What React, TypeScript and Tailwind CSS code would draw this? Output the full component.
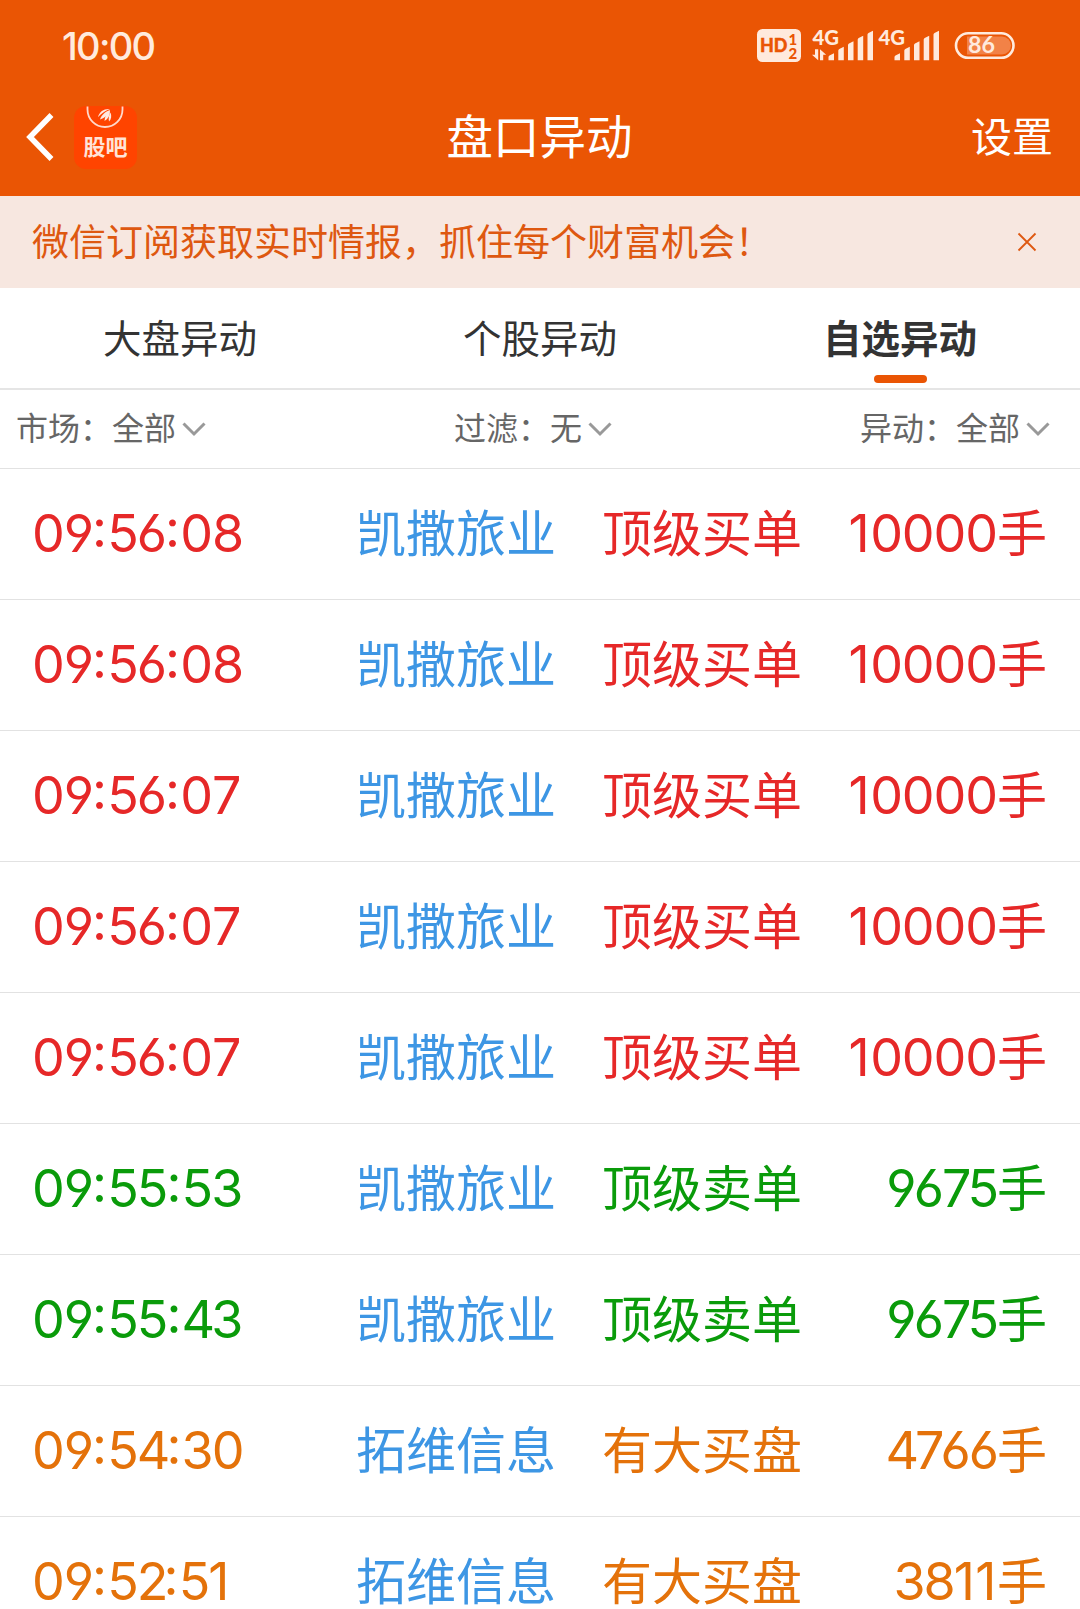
import { useState } from "react";

type Tone = "red" | "green" | "orange";

interface Alert {
  time: string;
  name: string;
  kind: string;
  lots: number;
  tone: Tone;
}

interface Filter {
  label: string;
  value: string;
}

const TONES: Record<Tone, string> = {
  red: "text-[#e62828]",
  green: "text-[#0a9b0a]",
  orange: "text-[#e4720a]",
};

// Optical spacing per digit, anything not listed uses the default.
const DIGIT_TRACKING: Record<string, string> = {
  ":": "tracking-[0.2px]",
  "0": "tracking-[-1.1px]",
  "1": "tracking-[0.5px]",
  "2": "tracking-[-5px]",
  "4": "tracking-[-4px]",
  "7": "tracking-[-4px]",
};

const TABS = ["大盘异动", "个股异动", "自选异动"];

const FILTERS: Filter[] = [
  { label: "市场", value: "全部" },
  { label: "过滤", value: "无" },
  { label: "异动", value: "全部" },
];

const ALERTS: Alert[] = [
  { time: "09:56:08", name: "凯撒旅业", kind: "顶级买单", lots: 10000, tone: "red" },
  { time: "09:56:08", name: "凯撒旅业", kind: "顶级买单", lots: 10000, tone: "red" },
  { time: "09:56:07", name: "凯撒旅业", kind: "顶级买单", lots: 10000, tone: "red" },
  { time: "09:56:07", name: "凯撒旅业", kind: "顶级买单", lots: 10000, tone: "red" },
  { time: "09:56:07", name: "凯撒旅业", kind: "顶级买单", lots: 10000, tone: "red" },
  { time: "09:55:53", name: "凯撒旅业", kind: "顶级卖单", lots: 9675, tone: "green" },
  { time: "09:55:43", name: "凯撒旅业", kind: "顶级卖单", lots: 9675, tone: "green" },
  { time: "09:54:30", name: "拓维信息", kind: "有大买盘", lots: 4766, tone: "orange" },
  { time: "09:52:51", name: "拓维信息", kind: "有大买盘", lots: 3811, tone: "orange" },
];

function Digits({ value }: { value: string }) {
  return (
    <span className="text-[52px] [font-feature-settings:'cv03','cv04','case']">
      {value.split("").map((c, i) => (
        <span key={i} className={DIGIT_TRACKING[c] ?? "tracking-[-2px]"}>
          {c}
        </span>
      ))}
    </span>
  );
}

function SignalBars({ x }: { x: number }) {
  return (
    <path
      transform={`translate(${x} 0)`}
      d="M0 32.3V29q0-1 1-1.500l4.500-2.300v7.100zM9.800 32.300V22.500q0-1 1-1.500l4.500-2.300v13.600zM19.500 32.300V17q0-1 1-1.500l4.500-2.300v19.100zM29.200 32.300V11.500q0-1 1-1.500l4.500-2.300v24.600zM39 32.300V6.500q0-1 1-1.500l4.500-2.300v29.600z"
    />
  );
}

function StatusIcons() {
  return (
    <svg
      width="262"
      height="36"
      viewBox="0 0 262 36"
      fill="#ffeadd"
      className="overflow-visible font-['Lato','Liberation_Sans',sans-serif]"
    >
      <rect x="1" y="1" width="44" height="33" rx="5.500" />
      <g fill="#ea5504">
        <text x="4" y="24.300" fontSize="18.500" fontWeight="900" stroke="#ea5504" strokeWidth=".4" textLength="27.500" lengthAdjust="spacingAndGlyphs">
          HD
        </text>
        <text x="32.500" y="17" fontSize="15" fontWeight="900">
          1
        </text>
        <text x="32.500" y="30.800" fontSize="15" fontWeight="900">
          2
        </text>
      </g>

      <text x="56.500" y="16.500" fontSize="20" fontWeight="900" textLength="26.500" lengthAdjust="spacingAndGlyphs">
        4G
      </text>
      {/* data arrows */}
      <path d="M59 21.300h3.200v11L56 26.800h3zM64 21.300l6.200 5.500h-3v5.500H64z" />
      <SignalBars x={72.5} />

      <text x="122.500" y="16.500" fontSize="20" fontWeight="900" textLength="26.500" lengthAdjust="spacingAndGlyphs">
        4G
      </text>
      <SignalBars x={138.5} />

      <rect x="200" y="5.300" width="57.500" height="24.500" rx="12.200" fill="none" stroke="#ffeadd" strokeWidth="2.600" />
      <path d="M211 8.500h35a8.500 8.500 0 0 1 0 18h-35z" fill="#f28247" />
      <text x="212" y="25" fontSize="22.500" fontWeight="700" textLength="27" lengthAdjust="spacingAndGlyphs">
        86
      </text>
    </svg>
  );
}

function GubaLogo() {
  return (
    <svg width="63" height="63" viewBox="0 0 63 63">
      <rect width="63" height="63" rx="12" fill="#ff4400" />
      <path d="M13.500 .5V3.500a17.500 17.500 0 0 0 35 0V.5" fill="none" stroke="#ffd9cc" strokeWidth="1.800" />
      <g fill="#ffe9e0">
        <path d="M24 11c1.500-5.500 6-8.500 12-8-4 1.500-8 4-12 8z" />
        <path d="M26 13.500c1.500-4.500 5-8 10-9.500-1.500 4.500-5 8-10 9.500z" />
        <path d="M30.500 15c.2-4 2-8 5.500-10.500.2 4.500-1.500 8-5.500 10.500z" />
        <path d="M35 15.500c-.8-3 0-6.500 1.500-9 1.300 3.500.8 7-1.500 9z" />
      </g>
      <text
        x="9.500"
        y="49"
        fontSize="22"
        fontWeight="700"
        fill="#ffe3d8"
        className="font-['Noto_Sans_CJK_SC',sans-serif]"
      >
        股吧
      </text>
    </svg>
  );
}

function ChevronDown() {
  return (
    <svg width="24" height="16" viewBox="0 0 24 16" fill="none" stroke="#999" strokeWidth="3">
      <path d="M1.500 2.500L12 13 22.500 2.500" />
    </svg>
  );
}

export default function App() {
  const [tab, setTab] = useState(2);
  const [showBanner, setShowBanner] = useState(true);

  return (
    <div className="flex h-[1609px] w-[1080px] flex-col overflow-hidden bg-white font-['Inter','Noto_Sans_CJK_SC',sans-serif]">
      {/* Header */}
      <header className="h-[196px] shrink-0 bg-[#ea5504] text-white">
        <div className="flex h-[92px] items-center justify-between pl-[62px] pr-[62px]">
          <span className="text-[38px] font-medium leading-none tracking-[-1.7px] text-[#ffeadd]">
            10:00
          </span>
          <StatusIcons />
        </div>
        <div className="grid h-[90px] grid-cols-[1fr_auto_1fr] items-center pl-[26px] pr-[27px]">
          <div className="flex items-center gap-[20px]">
            <svg width="28" height="48" viewBox="0 0 28 48" fill="none" stroke="#fff" strokeWidth="5.500">
              <path d="M25.500 2L4 24l21.500 22" />
            </svg>
            <GubaLogo />
          </div>
          <h1 className="text-[46.500px] leading-none">盘口异动</h1>
          <button className="justify-self-end text-[41px] leading-none">设置</button>
        </div>
      </header>

      {showBanner && (
        <div className="flex h-[92px] shrink-0 items-center justify-between bg-[#f7e7e0] pl-[32px] pr-[43px] text-[#de5810]">
          <p className="text-[37px] leading-none">微信订阅获取实时情报，抓住每个财富机会！</p>
          <button onClick={() => setShowBanner(false)}>
            <svg width="20" height="20" viewBox="0 0 20 20" fill="none" stroke="currentColor" strokeWidth="1.800">
              <path d="M1.500 1.500l17 17M18.500 1.500l-17 17" />
            </svg>
          </button>
        </div>
      )}

      {/* Tabs */}
      <nav className="grid h-[102px] shrink-0 grid-cols-3 border-b-2 border-[#e5e5e5] text-[38.500px] text-[#333]">
        {TABS.map((t, i) => (
          <button
            key={t}
            onClick={() => setTab(i)}
            className={`flex flex-col items-center pt-[32px] leading-none ${i === tab ? "font-bold" : ""}`}
          >
            {t}
            {i === tab && <span className="mt-[16px] h-[8px] w-[53px] rounded-full bg-[#ea5504]" />}
          </button>
        ))}
      </nav>

      {/* Filters */}
      <div className="flex h-[79px] shrink-0 items-center justify-between border-b border-[#e2e2e2] pl-[16px] pr-[30px] text-[32px] leading-none text-[#666]">
        {FILTERS.map((f) => (
          <button key={f.label} className="flex items-center gap-[6px]">
            <span>
              {f.label}：{f.value}
            </span>
            <ChevronDown />
          </button>
        ))}
      </div>

      {/* Alerts */}
      <ul>
        {ALERTS.map((a, i) => (
          <li
            key={i}
            className={`grid h-[131px] grid-cols-[324px_246px_200px_1fr] items-center border-b border-[#e2e2e2] pl-[32px] pr-[33px] text-[50px] leading-none ${TONES[a.tone]}`}
          >
            <Digits value={a.time} />
            <span className="text-[#3d96e4]">{a.name}</span>
            <span>{a.kind}</span>
            <span className="text-right">
              <Digits value={String(a.lots)} />手
            </span>
          </li>
        ))}
      </ul>
    </div>
  );
}
